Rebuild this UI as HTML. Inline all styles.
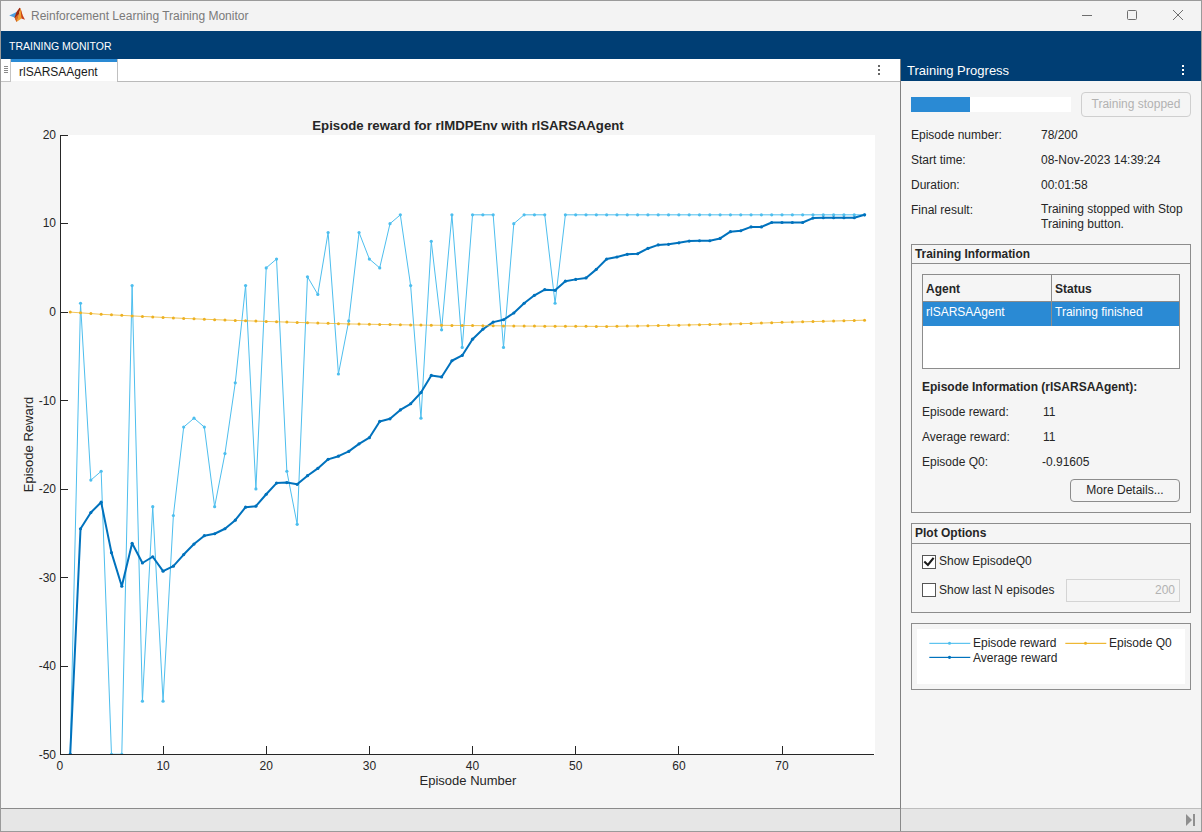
<!DOCTYPE html>
<html><head><meta charset="utf-8">
<style>
*{box-sizing:border-box;margin:0;padding:0}
html,body{width:1202px;height:832px;overflow:hidden;background:#f4f4f4;font-family:"Liberation Sans",sans-serif;color:#262626}
.abs{position:absolute}
.t{position:absolute;white-space:nowrap;font-size:12px;line-height:14px}
</style></head><body>
<!-- window frame -->
<div class="abs" style="left:0;top:0;width:1202px;height:832px;border:1px solid #9a9a9a;z-index:50;pointer-events:none"></div>
<!-- title bar -->
<div class="abs" style="left:0;top:0;width:1202px;height:31px;background:#f3f3f3"></div>
<svg class="abs" style="left:8px;top:6px" width="18" height="18" viewBox="0 0 18 18">
  <polygon points="1.2,9.5 5,7.8 8.5,6 10.5,8 6.5,11.5 4,10.6" fill="#4b9fe0"/>
  <polygon points="6.5,11.5 8.5,6 11.5,1.8 12.5,2.2 10.5,9.5 8.5,16" fill="#9e2a10"/>
  <polygon points="8.5,16 10.5,9.5 12.5,2.2 14.5,9 13.5,12.5" fill="#f0a030"/>
  <polygon points="12.5,2.2 14.5,9 17,13.8 13.5,12.5" fill="#c8401a"/>
  <polygon points="7,12 9.5,9 10.5,9.5 8.5,16" fill="#d96a20"/>
</svg>
<div class="t" style="left:31px;top:9px;font-size:12px;color:#7a7a7a">Reinforcement Learning Training Monitor</div>
<svg class="abs" style="left:1070px;top:0" width="132" height="31">
  <rect x="12" y="15" width="10" height="1" fill="#6e6e6e"/>
  <rect x="57.5" y="10.5" width="9" height="9" rx="1" fill="none" stroke="#6e6e6e" stroke-width="1"/>
  <path d="M103,10 L113,20 M113,10 L103,20" stroke="#6e6e6e" stroke-width="1"/>
</svg>
<!-- toolstrip -->
<div class="abs" style="left:0;top:31px;width:1202px;height:28px;background:#003e74"></div>
<div class="t" style="left:9px;top:39px;font-size:10.5px;color:#fff">TRAINING MONITOR</div>
<!-- document tab strip -->
<div class="abs" style="left:1px;top:59px;width:899px;height:22px;background:#fff"></div>
<div class="abs" style="left:117px;top:81px;width:783px;height:1px;background:#bababa"></div>
<div class="abs" style="left:1px;top:59px;width:10px;height:23px;border-right:1px solid #c4c4c4;border-bottom:1px solid #c4c4c4;background:#fff"></div>
<div class="abs" style="left:4px;top:66px;width:4px;height:1px;background:#8a8a8a;box-shadow:0 2px 0 #8a8a8a,0 4px 0 #8a8a8a,0 6px 0 #8a8a8a"></div>
<div class="abs" style="left:11px;top:59px;width:106px;height:3px;background:#2a8ad4"></div>
<div class="abs" style="left:117px;top:59px;width:1px;height:22px;background:#c0c0c0"></div>
<div class="t" style="left:19px;top:65px;font-size:12px;color:#1a1a1a">rlSARSAAgent</div>
<div class="abs" style="left:878px;top:65px;width:2px;height:2px;background:#666;box-shadow:0 4px 0 #666,0 8px 0 #666"></div>
<!-- plot area -->
<div class="abs" style="left:1px;top:82px;width:899px;height:726px;background:#f5f5f5"></div>
<svg width="1202" height="832" style="position:absolute;left:0;top:0">
<defs><clipPath id="ax"><rect x="61" y="135" width="814" height="620"/></clipPath></defs>
<rect x="61" y="135" width="814" height="620" fill="#fff"/>
<g clip-path="url(#ax)" fill="none" stroke-linejoin="round">
<path d="M70.22,754.25 L80.53,303.26 L90.85,480.12 L101.16,471.27 L111.48,754.25 L121.80,754.25 L132.11,285.57 L142.43,701.19 L152.74,506.65 L163.06,701.19 L173.38,515.49 L183.69,427.06 L194.01,418.22 L204.32,427.06 L214.64,506.65 L224.96,453.59 L235.27,382.84 L245.59,285.57 L255.90,488.96 L266.22,267.88 L276.54,259.04 L286.85,471.27 L297.17,524.33 L307.48,276.73 L317.80,294.41 L328.12,232.51 L338.43,374.00 L348.75,320.94 L359.06,232.51 L369.38,259.04 L379.70,267.88 L390.01,223.67 L400.33,214.83 L410.64,285.57 L420.96,418.22 L431.28,241.36 L441.59,329.79 L451.91,214.83 L462.22,347.47 L472.54,214.83 L482.86,214.83 L493.17,214.83 L503.49,347.47 L513.80,223.67 L524.12,214.83 L534.44,214.83 L544.75,214.83 L555.07,303.26 L565.38,214.83 L575.70,214.83 L586.02,214.83 L596.33,214.83 L606.65,214.83 L616.96,214.83 L627.28,214.83 L637.60,214.83 L647.91,214.83 L658.23,214.83 L668.54,214.83 L678.86,214.83 L689.18,214.83 L699.49,214.83 L709.81,214.83 L720.12,214.83 L730.44,214.83 L740.76,214.83 L751.07,214.83 L761.39,214.83 L771.70,214.83 L782.02,214.83 L792.34,214.83 L802.65,214.83 L812.97,214.83 L823.28,214.83 L833.60,214.83 L843.92,214.83 L854.23,214.83 L864.55,214.83" stroke="#4DBEEE" stroke-width="1"/>
<g fill="#4DBEEE" stroke="none"><circle cx="70.22" cy="754.25" r="1.6"/><circle cx="80.53" cy="303.26" r="1.6"/><circle cx="90.85" cy="480.12" r="1.6"/><circle cx="101.16" cy="471.27" r="1.6"/><circle cx="111.48" cy="754.25" r="1.6"/><circle cx="121.80" cy="754.25" r="1.6"/><circle cx="132.11" cy="285.57" r="1.6"/><circle cx="142.43" cy="701.19" r="1.6"/><circle cx="152.74" cy="506.65" r="1.6"/><circle cx="163.06" cy="701.19" r="1.6"/><circle cx="173.38" cy="515.49" r="1.6"/><circle cx="183.69" cy="427.06" r="1.6"/><circle cx="194.01" cy="418.22" r="1.6"/><circle cx="204.32" cy="427.06" r="1.6"/><circle cx="214.64" cy="506.65" r="1.6"/><circle cx="224.96" cy="453.59" r="1.6"/><circle cx="235.27" cy="382.84" r="1.6"/><circle cx="245.59" cy="285.57" r="1.6"/><circle cx="255.90" cy="488.96" r="1.6"/><circle cx="266.22" cy="267.88" r="1.6"/><circle cx="276.54" cy="259.04" r="1.6"/><circle cx="286.85" cy="471.27" r="1.6"/><circle cx="297.17" cy="524.33" r="1.6"/><circle cx="307.48" cy="276.73" r="1.6"/><circle cx="317.80" cy="294.41" r="1.6"/><circle cx="328.12" cy="232.51" r="1.6"/><circle cx="338.43" cy="374.00" r="1.6"/><circle cx="348.75" cy="320.94" r="1.6"/><circle cx="359.06" cy="232.51" r="1.6"/><circle cx="369.38" cy="259.04" r="1.6"/><circle cx="379.70" cy="267.88" r="1.6"/><circle cx="390.01" cy="223.67" r="1.6"/><circle cx="400.33" cy="214.83" r="1.6"/><circle cx="410.64" cy="285.57" r="1.6"/><circle cx="420.96" cy="418.22" r="1.6"/><circle cx="431.28" cy="241.36" r="1.6"/><circle cx="441.59" cy="329.79" r="1.6"/><circle cx="451.91" cy="214.83" r="1.6"/><circle cx="462.22" cy="347.47" r="1.6"/><circle cx="472.54" cy="214.83" r="1.6"/><circle cx="482.86" cy="214.83" r="1.6"/><circle cx="493.17" cy="214.83" r="1.6"/><circle cx="503.49" cy="347.47" r="1.6"/><circle cx="513.80" cy="223.67" r="1.6"/><circle cx="524.12" cy="214.83" r="1.6"/><circle cx="534.44" cy="214.83" r="1.6"/><circle cx="544.75" cy="214.83" r="1.6"/><circle cx="555.07" cy="303.26" r="1.6"/><circle cx="565.38" cy="214.83" r="1.6"/><circle cx="575.70" cy="214.83" r="1.6"/><circle cx="586.02" cy="214.83" r="1.6"/><circle cx="596.33" cy="214.83" r="1.6"/><circle cx="606.65" cy="214.83" r="1.6"/><circle cx="616.96" cy="214.83" r="1.6"/><circle cx="627.28" cy="214.83" r="1.6"/><circle cx="637.60" cy="214.83" r="1.6"/><circle cx="647.91" cy="214.83" r="1.6"/><circle cx="658.23" cy="214.83" r="1.6"/><circle cx="668.54" cy="214.83" r="1.6"/><circle cx="678.86" cy="214.83" r="1.6"/><circle cx="689.18" cy="214.83" r="1.6"/><circle cx="699.49" cy="214.83" r="1.6"/><circle cx="709.81" cy="214.83" r="1.6"/><circle cx="720.12" cy="214.83" r="1.6"/><circle cx="730.44" cy="214.83" r="1.6"/><circle cx="740.76" cy="214.83" r="1.6"/><circle cx="751.07" cy="214.83" r="1.6"/><circle cx="761.39" cy="214.83" r="1.6"/><circle cx="771.70" cy="214.83" r="1.6"/><circle cx="782.02" cy="214.83" r="1.6"/><circle cx="792.34" cy="214.83" r="1.6"/><circle cx="802.65" cy="214.83" r="1.6"/><circle cx="812.97" cy="214.83" r="1.6"/><circle cx="823.28" cy="214.83" r="1.6"/><circle cx="833.60" cy="214.83" r="1.6"/><circle cx="843.92" cy="214.83" r="1.6"/><circle cx="854.23" cy="214.83" r="1.6"/><circle cx="864.55" cy="214.83" r="1.6"/></g>
<path d="M70.22,754.25 L80.53,528.75 L90.85,512.54 L101.16,502.22 L111.48,552.63 L121.80,586.23 L132.11,543.28 L142.43,563.02 L152.74,556.76 L163.06,571.20 L173.38,566.14 L183.69,554.55 L194.01,544.06 L204.32,535.70 L214.64,533.76 L224.96,528.75 L235.27,520.17 L245.59,507.14 L255.90,506.18 L266.22,494.27 L276.54,483.06 L286.85,482.53 L297.17,484.35 L307.48,475.70 L317.80,468.44 L328.12,459.37 L338.43,456.21 L348.75,451.38 L359.06,443.83 L369.38,437.67 L379.70,421.46 L390.01,418.81 L400.33,409.96 L410.64,403.77 L420.96,392.57 L431.28,375.47 L441.59,376.95 L451.91,360.74 L462.22,355.43 L472.54,339.22 L482.86,329.20 L493.17,322.12 L503.49,319.76 L513.80,312.98 L524.12,303.26 L534.44,295.30 L544.75,289.70 L555.07,290.29 L565.38,281.15 L575.70,279.38 L586.02,277.91 L596.33,269.36 L606.65,259.04 L616.96,256.98 L627.28,254.33 L637.60,253.74 L647.91,248.43 L658.23,244.89 L668.54,244.30 L678.86,242.83 L689.18,241.06 L699.49,240.77 L709.81,240.77 L720.12,238.41 L730.44,231.63 L740.76,230.74 L751.07,226.91 L761.39,226.91 L771.70,222.49 L782.02,222.49 L792.34,222.49 L802.65,222.49 L812.97,218.07 L823.28,217.77 L833.60,217.77 L843.92,217.77 L854.23,217.77 L864.55,214.83" stroke="#0072BD" stroke-width="2"/>
<g fill="#0072BD" stroke="none"><circle cx="70.22" cy="754.25" r="1.6"/><circle cx="80.53" cy="528.75" r="1.6"/><circle cx="90.85" cy="512.54" r="1.6"/><circle cx="101.16" cy="502.22" r="1.6"/><circle cx="111.48" cy="552.63" r="1.6"/><circle cx="121.80" cy="586.23" r="1.6"/><circle cx="132.11" cy="543.28" r="1.6"/><circle cx="142.43" cy="563.02" r="1.6"/><circle cx="152.74" cy="556.76" r="1.6"/><circle cx="163.06" cy="571.20" r="1.6"/><circle cx="173.38" cy="566.14" r="1.6"/><circle cx="183.69" cy="554.55" r="1.6"/><circle cx="194.01" cy="544.06" r="1.6"/><circle cx="204.32" cy="535.70" r="1.6"/><circle cx="214.64" cy="533.76" r="1.6"/><circle cx="224.96" cy="528.75" r="1.6"/><circle cx="235.27" cy="520.17" r="1.6"/><circle cx="245.59" cy="507.14" r="1.6"/><circle cx="255.90" cy="506.18" r="1.6"/><circle cx="266.22" cy="494.27" r="1.6"/><circle cx="276.54" cy="483.06" r="1.6"/><circle cx="286.85" cy="482.53" r="1.6"/><circle cx="297.17" cy="484.35" r="1.6"/><circle cx="307.48" cy="475.70" r="1.6"/><circle cx="317.80" cy="468.44" r="1.6"/><circle cx="328.12" cy="459.37" r="1.6"/><circle cx="338.43" cy="456.21" r="1.6"/><circle cx="348.75" cy="451.38" r="1.6"/><circle cx="359.06" cy="443.83" r="1.6"/><circle cx="369.38" cy="437.67" r="1.6"/><circle cx="379.70" cy="421.46" r="1.6"/><circle cx="390.01" cy="418.81" r="1.6"/><circle cx="400.33" cy="409.96" r="1.6"/><circle cx="410.64" cy="403.77" r="1.6"/><circle cx="420.96" cy="392.57" r="1.6"/><circle cx="431.28" cy="375.47" r="1.6"/><circle cx="441.59" cy="376.95" r="1.6"/><circle cx="451.91" cy="360.74" r="1.6"/><circle cx="462.22" cy="355.43" r="1.6"/><circle cx="472.54" cy="339.22" r="1.6"/><circle cx="482.86" cy="329.20" r="1.6"/><circle cx="493.17" cy="322.12" r="1.6"/><circle cx="503.49" cy="319.76" r="1.6"/><circle cx="513.80" cy="312.98" r="1.6"/><circle cx="524.12" cy="303.26" r="1.6"/><circle cx="534.44" cy="295.30" r="1.6"/><circle cx="544.75" cy="289.70" r="1.6"/><circle cx="555.07" cy="290.29" r="1.6"/><circle cx="565.38" cy="281.15" r="1.6"/><circle cx="575.70" cy="279.38" r="1.6"/><circle cx="586.02" cy="277.91" r="1.6"/><circle cx="596.33" cy="269.36" r="1.6"/><circle cx="606.65" cy="259.04" r="1.6"/><circle cx="616.96" cy="256.98" r="1.6"/><circle cx="627.28" cy="254.33" r="1.6"/><circle cx="637.60" cy="253.74" r="1.6"/><circle cx="647.91" cy="248.43" r="1.6"/><circle cx="658.23" cy="244.89" r="1.6"/><circle cx="668.54" cy="244.30" r="1.6"/><circle cx="678.86" cy="242.83" r="1.6"/><circle cx="689.18" cy="241.06" r="1.6"/><circle cx="699.49" cy="240.77" r="1.6"/><circle cx="709.81" cy="240.77" r="1.6"/><circle cx="720.12" cy="238.41" r="1.6"/><circle cx="730.44" cy="231.63" r="1.6"/><circle cx="740.76" cy="230.74" r="1.6"/><circle cx="751.07" cy="226.91" r="1.6"/><circle cx="761.39" cy="226.91" r="1.6"/><circle cx="771.70" cy="222.49" r="1.6"/><circle cx="782.02" cy="222.49" r="1.6"/><circle cx="792.34" cy="222.49" r="1.6"/><circle cx="802.65" cy="222.49" r="1.6"/><circle cx="812.97" cy="218.07" r="1.6"/><circle cx="823.28" cy="217.77" r="1.6"/><circle cx="833.60" cy="217.77" r="1.6"/><circle cx="843.92" cy="217.77" r="1.6"/><circle cx="854.23" cy="217.77" r="1.6"/><circle cx="864.55" cy="214.83" r="1.6"/></g>
<path d="M70.22,312.10 L80.53,312.84 L90.85,313.57 L101.16,314.31 L111.48,314.84 L121.80,315.37 L132.11,315.90 L142.43,316.43 L152.74,316.92 L163.06,317.41 L173.38,317.89 L183.69,318.38 L194.01,318.80 L204.32,319.22 L214.64,319.64 L224.96,320.06 L235.27,320.41 L245.59,320.77 L255.90,321.12 L266.22,321.44 L276.54,321.77 L286.85,322.09 L297.17,322.42 L307.48,322.74 L317.80,323.07 L328.12,323.36 L338.43,323.65 L348.75,323.95 L359.06,324.11 L369.38,324.28 L379.70,324.44 L390.01,324.61 L400.33,324.77 L410.64,324.93 L420.96,325.10 L431.28,325.20 L441.59,325.29 L451.91,325.39 L462.22,325.49 L472.54,325.59 L482.86,325.68 L493.17,325.78 L503.49,325.88 L513.80,325.97 L524.12,326.07 L534.44,326.12 L544.75,326.16 L555.07,326.20 L565.38,326.25 L575.70,326.29 L586.02,326.34 L596.33,326.38 L606.65,326.43 L616.96,326.27 L627.28,326.12 L637.60,325.96 L647.91,325.81 L658.23,325.59 L668.54,325.36 L678.86,325.14 L689.18,324.92 L699.49,324.70 L709.81,324.48 L720.12,324.21 L730.44,323.95 L740.76,323.68 L751.07,323.42 L761.39,323.07 L771.70,322.71 L782.02,322.36 L792.34,322.09 L802.65,321.83 L812.97,321.56 L823.28,321.30 L833.60,321.02 L843.92,320.75 L854.23,320.47 L864.55,320.20" stroke="#EDB120" stroke-opacity="0.75" stroke-width="1"/>
<g fill="#EDB120" stroke="none"><circle cx="70.22" cy="312.10" r="1.5"/><circle cx="80.53" cy="312.84" r="1.5"/><circle cx="90.85" cy="313.57" r="1.5"/><circle cx="101.16" cy="314.31" r="1.5"/><circle cx="111.48" cy="314.84" r="1.5"/><circle cx="121.80" cy="315.37" r="1.5"/><circle cx="132.11" cy="315.90" r="1.5"/><circle cx="142.43" cy="316.43" r="1.5"/><circle cx="152.74" cy="316.92" r="1.5"/><circle cx="163.06" cy="317.41" r="1.5"/><circle cx="173.38" cy="317.89" r="1.5"/><circle cx="183.69" cy="318.38" r="1.5"/><circle cx="194.01" cy="318.80" r="1.5"/><circle cx="204.32" cy="319.22" r="1.5"/><circle cx="214.64" cy="319.64" r="1.5"/><circle cx="224.96" cy="320.06" r="1.5"/><circle cx="235.27" cy="320.41" r="1.5"/><circle cx="245.59" cy="320.77" r="1.5"/><circle cx="255.90" cy="321.12" r="1.5"/><circle cx="266.22" cy="321.44" r="1.5"/><circle cx="276.54" cy="321.77" r="1.5"/><circle cx="286.85" cy="322.09" r="1.5"/><circle cx="297.17" cy="322.42" r="1.5"/><circle cx="307.48" cy="322.74" r="1.5"/><circle cx="317.80" cy="323.07" r="1.5"/><circle cx="328.12" cy="323.36" r="1.5"/><circle cx="338.43" cy="323.65" r="1.5"/><circle cx="348.75" cy="323.95" r="1.5"/><circle cx="359.06" cy="324.11" r="1.5"/><circle cx="369.38" cy="324.28" r="1.5"/><circle cx="379.70" cy="324.44" r="1.5"/><circle cx="390.01" cy="324.61" r="1.5"/><circle cx="400.33" cy="324.77" r="1.5"/><circle cx="410.64" cy="324.93" r="1.5"/><circle cx="420.96" cy="325.10" r="1.5"/><circle cx="431.28" cy="325.20" r="1.5"/><circle cx="441.59" cy="325.29" r="1.5"/><circle cx="451.91" cy="325.39" r="1.5"/><circle cx="462.22" cy="325.49" r="1.5"/><circle cx="472.54" cy="325.59" r="1.5"/><circle cx="482.86" cy="325.68" r="1.5"/><circle cx="493.17" cy="325.78" r="1.5"/><circle cx="503.49" cy="325.88" r="1.5"/><circle cx="513.80" cy="325.97" r="1.5"/><circle cx="524.12" cy="326.07" r="1.5"/><circle cx="534.44" cy="326.12" r="1.5"/><circle cx="544.75" cy="326.16" r="1.5"/><circle cx="555.07" cy="326.20" r="1.5"/><circle cx="565.38" cy="326.25" r="1.5"/><circle cx="575.70" cy="326.29" r="1.5"/><circle cx="586.02" cy="326.34" r="1.5"/><circle cx="596.33" cy="326.38" r="1.5"/><circle cx="606.65" cy="326.43" r="1.5"/><circle cx="616.96" cy="326.27" r="1.5"/><circle cx="627.28" cy="326.12" r="1.5"/><circle cx="637.60" cy="325.96" r="1.5"/><circle cx="647.91" cy="325.81" r="1.5"/><circle cx="658.23" cy="325.59" r="1.5"/><circle cx="668.54" cy="325.36" r="1.5"/><circle cx="678.86" cy="325.14" r="1.5"/><circle cx="689.18" cy="324.92" r="1.5"/><circle cx="699.49" cy="324.70" r="1.5"/><circle cx="709.81" cy="324.48" r="1.5"/><circle cx="720.12" cy="324.21" r="1.5"/><circle cx="730.44" cy="323.95" r="1.5"/><circle cx="740.76" cy="323.68" r="1.5"/><circle cx="751.07" cy="323.42" r="1.5"/><circle cx="761.39" cy="323.07" r="1.5"/><circle cx="771.70" cy="322.71" r="1.5"/><circle cx="782.02" cy="322.36" r="1.5"/><circle cx="792.34" cy="322.09" r="1.5"/><circle cx="802.65" cy="321.83" r="1.5"/><circle cx="812.97" cy="321.56" r="1.5"/><circle cx="823.28" cy="321.30" r="1.5"/><circle cx="833.60" cy="321.02" r="1.5"/><circle cx="843.92" cy="320.75" r="1.5"/><circle cx="854.23" cy="320.47" r="1.5"/><circle cx="864.55" cy="320.20" r="1.5"/></g>
</g>
<g fill="#262626" stroke="none">
<rect x="60" y="135" width="1" height="620"/>
<rect x="60" y="754" width="814" height="1"/>
<rect x="61" y="135" width="7" height="1"/>
<rect x="61" y="223" width="7" height="1"/>
<rect x="61" y="312" width="7" height="1"/>
<rect x="61" y="400" width="7" height="1"/>
<rect x="61" y="489" width="7" height="1"/>
<rect x="61" y="577" width="7" height="1"/>
<rect x="61" y="666" width="7" height="1"/>
<rect x="163" y="746" width="1" height="8"/>
<rect x="266" y="746" width="1" height="8"/>
<rect x="369" y="746" width="1" height="8"/>
<rect x="472" y="746" width="1" height="8"/>
<rect x="575" y="746" width="1" height="8"/>
<rect x="678" y="746" width="1" height="8"/>
<rect x="782" y="746" width="1" height="8"/>
</g>
<g font-family="Liberation Sans, sans-serif" font-size="12" fill="#262626">
<text x="56" y="138.8" text-anchor="end">20</text>
<text x="56" y="227.4" text-anchor="end">10</text>
<text x="56" y="315.9" text-anchor="end">0</text>
<text x="56" y="404.5" text-anchor="end">-10</text>
<text x="56" y="493.1" text-anchor="end">-20</text>
<text x="56" y="581.6" text-anchor="end">-30</text>
<text x="56" y="670.2" text-anchor="end">-40</text>
<text x="56" y="758.8" text-anchor="end">-50</text>
<text x="59.9" y="770" text-anchor="middle">0</text>
<text x="163.1" y="770" text-anchor="middle">10</text>
<text x="266.2" y="770" text-anchor="middle">20</text>
<text x="369.4" y="770" text-anchor="middle">30</text>
<text x="472.5" y="770" text-anchor="middle">40</text>
<text x="575.7" y="770" text-anchor="middle">50</text>
<text x="678.9" y="770" text-anchor="middle">60</text>
<text x="782.0" y="770" text-anchor="middle">70</text>
</g>
<text x="468" y="129.7" text-anchor="middle" font-family="Liberation Sans, sans-serif" font-size="13.2" font-weight="bold" fill="#262626">Episode reward for rlMDPEnv with rlSARSAAgent</text>
<text x="468" y="784.7" text-anchor="middle" font-family="Liberation Sans, sans-serif" font-size="13" fill="#262626">Episode Number</text>
<text transform="translate(33.4,444.5) rotate(-90)" x="0" y="0" text-anchor="middle" font-family="Liberation Sans, sans-serif" font-size="13" fill="#262626">Episode Reward</text>
</svg>
<!-- divider -->
<div class="abs" style="left:900px;top:59px;width:1px;height:772px;background:#808080"></div>
<!-- right panel -->
<div class="abs" style="left:901px;top:59px;width:300px;height:22px;background:#003e74"></div>
<div class="t" style="left:907px;top:62.5px;font-size:13px;line-height:16px;color:#fff">Training Progress</div>
<div class="abs" style="left:1182px;top:65px;width:2px;height:2px;background:#fff;box-shadow:0 4px 0 #fff,0 8px 0 #fff"></div>
<div class="abs" style="left:901px;top:81px;width:300px;height:727px;background:#f5f5f5"></div>
<!-- status bar -->
<div class="abs" style="left:1px;top:808px;width:899px;height:1px;background:#8a8a8a"></div>
<div class="abs" style="left:901px;top:808px;width:300px;height:1px;background:#bdbdbd"></div>
<div class="abs" style="left:1px;top:809px;width:1200px;height:22px;background:#e6e6e6"></div>
<div class="abs" style="left:900px;top:808px;width:1px;height:23px;background:#8a8a8a"></div>
<svg class="abs" style="left:1184px;top:813px" width="14" height="14"><polygon points="2,1 8,7 2,13" fill="#8f8f8f"/><rect x="9" y="1" width="2" height="12" fill="#8f8f8f"/></svg>
<!-- progress -->
<div class="abs" style="left:911px;top:97px;width:160px;height:15px;background:#fff"></div>
<div class="abs" style="left:911px;top:97px;width:59px;height:15px;background:#2a8ad4"></div>
<div class="abs" style="left:1081px;top:92px;width:110px;height:25px;border:1px solid #cfcfcf;border-radius:4px;background:#f5f5f5"></div>
<div class="t" style="left:1081px;top:97px;width:110px;text-align:center;color:#b2b2b2">Training stopped</div>
<div class="t" style="left:911px;top:128px">Episode number:</div>
<div class="t" style="left:1041px;top:128px">78/200</div>
<div class="t" style="left:911px;top:153px">Start time:</div>
<div class="t" style="left:1041px;top:153px">08-Nov-2023 14:39:24</div>
<div class="t" style="left:911px;top:178px">Duration:</div>
<div class="t" style="left:1041px;top:178px">00:01:58</div>
<div class="t" style="left:911px;top:203px">Final result:</div>
<div class="t" style="left:1041px;top:202px">Training stopped with Stop</div>
<div class="t" style="left:1041px;top:216.5px">Training button.</div>
<!-- training information panel -->
<div class="abs" style="left:911px;top:244px;width:280px;height:269px;border:1px solid #8c8c8c"></div>
<div class="abs" style="left:912px;top:263px;width:278px;height:1px;background:#8c8c8c"></div>
<div class="t" style="left:915px;top:247px;font-weight:bold;font-size:11.9px">Training Information</div>
<div class="abs" style="left:922px;top:274px;width:258px;height:95px;border:1px solid #8c8c8c;background:#fff"></div>
<div class="abs" style="left:923px;top:275px;width:256px;height:26px;background:#f5f5f5"></div>
<div class="abs" style="left:923px;top:302px;width:256px;height:24px;background:#2a8ad4"></div>
<div class="abs" style="left:1051px;top:275px;width:1px;height:51px;background:#8c8c8c"></div>
<div class="abs" style="left:923px;top:301px;width:256px;height:1px;background:#8c8c8c"></div>
<div class="t" style="left:926px;top:282px;font-weight:bold">Agent</div>
<div class="t" style="left:1055px;top:282px;font-weight:bold">Status</div>
<div class="t" style="left:926px;top:305px;color:#fff">rlSARSAAgent</div>
<div class="t" style="left:1055px;top:305px;color:#fff">Training finished</div>
<div class="t" style="left:922px;top:380px;font-weight:bold">Episode Information (rlSARSAAgent):</div>
<div class="t" style="left:922px;top:405px">Episode reward:</div>
<div class="t" style="left:1043px;top:405px">11</div>
<div class="t" style="left:922px;top:430px">Average reward:</div>
<div class="t" style="left:1043px;top:430px">11</div>
<div class="t" style="left:922px;top:455px">Episode Q0:</div>
<div class="t" style="left:1042px;top:455px">-0.91605</div>
<div class="abs" style="left:1070px;top:479px;width:110px;height:23px;border:1px solid #8c8c8c;border-radius:4px;background:#f5f5f5"></div>
<div class="t" style="left:1070px;top:483px;width:110px;text-align:center">More Details...</div>
<!-- plot options -->
<div class="abs" style="left:911px;top:523px;width:280px;height:90px;border:1px solid #8c8c8c"></div>
<div class="abs" style="left:912px;top:543px;width:278px;height:1px;background:#8c8c8c"></div>
<div class="t" style="left:915px;top:526px;font-weight:bold">Plot Options</div>
<div class="abs" style="left:922px;top:555px;width:14px;height:14px;border:1px solid #555;background:#fff"></div>
<svg class="abs" style="left:922px;top:555px" width="14" height="14"><path d="M2.3,6.6 L5.9,10 L11.6,2.9" fill="none" stroke="#1a1a1a" stroke-width="2.1"/></svg>
<div class="t" style="left:939px;top:554px">Show EpisodeQ0</div>
<div class="abs" style="left:922px;top:583px;width:14px;height:14px;border:1px solid #555;background:#fff"></div>
<div class="t" style="left:939px;top:583px">Show last N episodes</div>
<div class="abs" style="left:1066px;top:579px;width:114px;height:23px;border:1px solid #d4d4d4;background:#f5f5f5"></div>
<div class="t" style="left:1066px;top:583px;width:109px;text-align:right;color:#b2b2b2">200</div>
<!-- legend -->
<div class="abs" style="left:911px;top:623px;width:280px;height:67px;border:1px solid #8c8c8c"></div>
<div class="abs" style="left:917px;top:629px;width:268px;height:55px;background:#fff"></div>
<svg class="abs" style="left:911px;top:623px" width="280" height="67">
  <rect x="18.3" y="19.8" width="41" height="1.1" fill="#4DBEEE"/><circle cx="38.5" cy="20.3" r="1.5" fill="#4DBEEE"/>
  <rect x="154.3" y="19.8" width="41" height="1.1" fill="#EDB120"/><circle cx="174.5" cy="20.3" r="1.5" fill="#EDB120"/>
  <rect x="18.3" y="33.8" width="41" height="1.2" fill="#0072BD"/><circle cx="38.5" cy="34.3" r="1.6" fill="#0072BD"/>
</svg>
<div class="t" style="left:973px;top:636px">Episode reward</div>
<div class="t" style="left:1109px;top:636px">Episode Q0</div>
<div class="t" style="left:973px;top:651px">Average reward</div>
</body></html>
